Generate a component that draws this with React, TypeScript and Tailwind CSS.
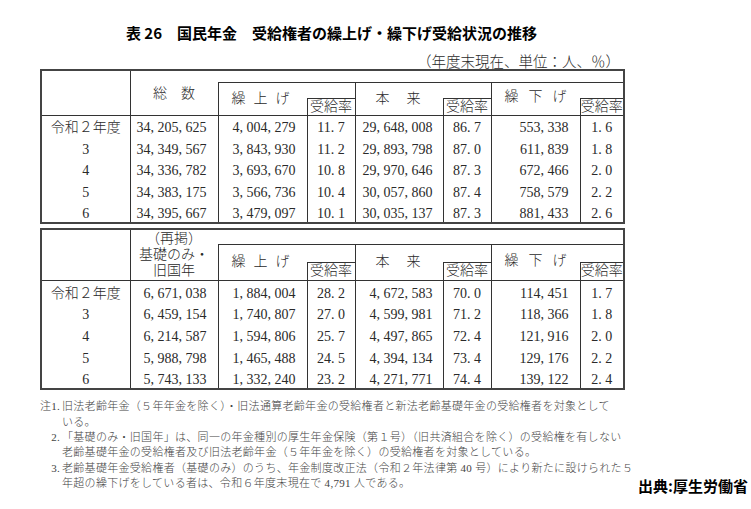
import React from 'react';

const SERIF = { fontFamily: '"Liberation Serif", "Noto Sans CJK JP", serif' };
const SANS = { fontFamily: '"Noto Sans CJK JP", "Noto Sans", sans-serif' };

// 数字は「34, 205, 625」のように区切りの後ろを空ける
const sp = (s: string) => s.replace(/,/g, ', ').replace('.', '. ');

type Row = [string, string, string, string, string, string, string, string];

const table1: Row[] = [
  ['令和２年度', '34,205,625', '4,004,279', '11.7', '29,648,008', '86.7', '553,338', '1.6'],
  ['3', '34,349,567', '3,843,930', '11.2', '29,893,798', '87.0', '611,839', '1.8'],
  ['4', '34,336,782', '3,693,670', '10.8', '29,970,646', '87.3', '672,466', '2.0'],
  ['5', '34,383,175', '3,566,736', '10.4', '30,057,860', '87.4', '758,579', '2.2'],
  ['6', '34,395,667', '3,479,097', '10.1', '30,035,137', '87.3', '881,433', '2.6'],
];

const table2: Row[] = [
  ['令和２年度', '6,671,038', '1,884,004', '28.2', '4,672,583', '70.0', '114,451', '1.7'],
  ['3', '6,459,154', '1,740,807', '27.0', '4,599,981', '71.2', '118,366', '1.8'],
  ['4', '6,214,587', '1,594,806', '25.7', '4,497,865', '72.4', '121,916', '2.0'],
  ['5', '5,988,798', '1,465,488', '24.5', '4,394,134', '73.4', '129,176', '2.2'],
  ['6', '5,743,133', '1,332,240', '23.2', '4,271,771', '74.4', '139,122', '2.4'],
];

const bodyCls = [
  'text-center',
  'text-right pr-[11px] border-l border-[#333]',
  'text-right pr-[11px] border-l border-[#333]',
  'text-center border-l border-[#333]',
  'text-right pr-[10px] border-l border-[#333]',
  'text-center border-l border-[#333]',
  'text-right pr-[11px] border-l border-[#333]',
  'text-center border-l border-[#333]',
];

function Cols() {
  return (
    <colgroup>
      <col className="w-[89px]" />
      <col className="w-[88px]" />
      <col className="w-[89px]" />
      <col className="w-[48px]" />
      <col className="w-[88px]" />
      <col className="w-[48px]" />
      <col className="w-[89px]" />
      <col className="w-[44px]" />
    </colgroup>
  );
}

function Body({ rows, pad }: { rows: Row[]; pad: string }) {
  return (
    <tbody>
      {rows.map((r) => (
        <tr key={r[0]} className="h-[21.7px]">
          {r.map((v, i) => (
            <td key={i} className={`p-0 ${pad} font-light text-[14px] leading-[16px] ${bodyCls[i]}`}>
              {i === 0 ? v : sp(v)}
            </td>
          ))}
        </tr>
      ))}
    </tbody>
  );
}

function SubHeads({ h }: { h: string }) {
  return (
    <tr className={h}>
      <th className="p-0 font-light text-[14px] leading-[16px] border-l border-t border-b border-[#333]">受給率</th>
      <th className="p-0 font-light text-[14px] leading-[16px] border-l border-t border-b border-[#333]">受給率</th>
      <th className="p-0 font-light text-[14px] leading-[16px] border-l border-t border-b border-[#333]">受給率</th>
    </tr>
  );
}

function GroupHeads({ h }: { h: string }) {
  return (
    <tr className={h}>
      <th rowSpan={2} className="p-0 pl-[13px] text-left font-light text-[14px] leading-[16px] tracking-[8px] border-l border-b border-[#333]">
        繰上げ
      </th>
      <th className="p-0" />
      <th rowSpan={2} className="p-0 pl-[20px] text-left font-light text-[14px] leading-[16px] tracking-[17px] border-l border-b border-[#333]">
        本来
      </th>
      <th className="p-0" />
      <th rowSpan={2} className="p-0 pl-[13px] pb-[3px] text-left font-light text-[14px] leading-[16px] tracking-[10px] border-l border-b border-[#333]">
        繰下げ
      </th>
      <th className="p-0" />
    </tr>
  );
}

function Table1() {
  return (
    <table className="w-[583px] table-fixed border-collapse border-2 border-[#444]">
      <Cols />
      <thead>
        <tr className="h-[12px]">
          <th rowSpan={3} className="p-0 border-r border-b border-[#333]" />
          <th rowSpan={3} className="p-0 pt-[3px] font-light text-[14px] leading-[16px] tracking-[14px] indent-[14px] border-b border-[#333]">
            総数
          </th>
          <th colSpan={6} className="p-0 border-b border-[#333]" />
        </tr>
        <GroupHeads h="h-[16px]" />
        <SubHeads h="h-[17px]" />
      </thead>
      <Body rows={table1} pad="pt-[4px]" />
    </table>
  );
}

function Table2() {
  return (
    <table className="mt-[4px] w-[583px] table-fixed border-collapse border-2 border-[#444]">
      <Cols />
      <thead>
        <tr className="h-[15px]">
          <th rowSpan={3} className="p-0 border-r border-b border-[#333]" />
          <th rowSpan={3} className="p-0 font-light text-[14px] leading-[16px] border-b border-[#333]">
            <div>（再掲）</div>
            <div>基礎のみ・</div>
            <div>旧国年</div>
          </th>
          <th colSpan={6} className="p-0 border-b border-[#333]" />
        </tr>
        <GroupHeads h="h-[18px]" />
        <SubHeads h="h-[18px]" />
      </thead>
      <Body rows={table2} pad="pt-[5px]" />
    </table>
  );
}

const notes = [
  {
    label: '注1.',
    lines: [
      '旧法老齢年金（５年年金を除く）・旧法通算老齢年金の受給権者と新法老齢基礎年金の受給権者を対象として',
      'いる。',
    ],
  },
  {
    label: '2.',
    lines: [
      '「基礎のみ・旧国年」は、同一の年金種別の厚生年金保険（第１号）（旧共済組合を除く）の受給権を有しない',
      '老齢基礎年金の受給権者及び旧法老齢年金（５年年金を除く）の受給権者を対象としている。',
    ],
  },
  {
    label: '3.',
    lines: [
      '老齢基礎年金受給権者（基礎のみ）のうち、年金制度改正法（令和２年法律第 40 号）により新たに設けられた５',
      '年超の繰下げをしている者は、令和６年度末現在で 4,791 人である。',
    ],
  },
];

export default function App() {
  return (
    <div className="w-[751px] h-[509px] bg-white text-[#2a2a2a] overflow-hidden" style={SERIF}>
      <div className="pl-[40px] w-[623px] pt-[23px]">
        <h1 className="text-center text-[15px] font-bold leading-[20px] text-black" style={SANS}>
          表 26　国民年金　受給権者の繰上げ・繰下げ受給状況の推移
        </h1>
        <div className="mt-[12px] pr-[3px] text-right text-[14.5px] leading-[14px] font-light">
          （年度末現在、単位：人、％）
        </div>
        <Table1 />
        <Table2 />
      </div>

      <div className="mt-[9px] flex items-end">
        <div className="w-[637px] pl-[40px] text-[11px] leading-[15.4px] tracking-[0.3px] font-light text-[#444]">
          {notes.map((n) => (
            <div key={n.label}>
              {n.lines.map((l, i) => (
                <div key={i} className="flex whitespace-nowrap">
                  <span className="w-[22px] shrink-0 pr-[2px] text-right">{i === 0 ? n.label : ''}</span>
                  <span>{l}</span>
                </div>
              ))}
            </div>
          ))}
        </div>
        <div className="ml-auto pr-[3px] text-[15px] leading-[12px] font-bold text-black whitespace-nowrap" style={SANS}>
          出典:厚生労働省
        </div>
      </div>
    </div>
  );
}
